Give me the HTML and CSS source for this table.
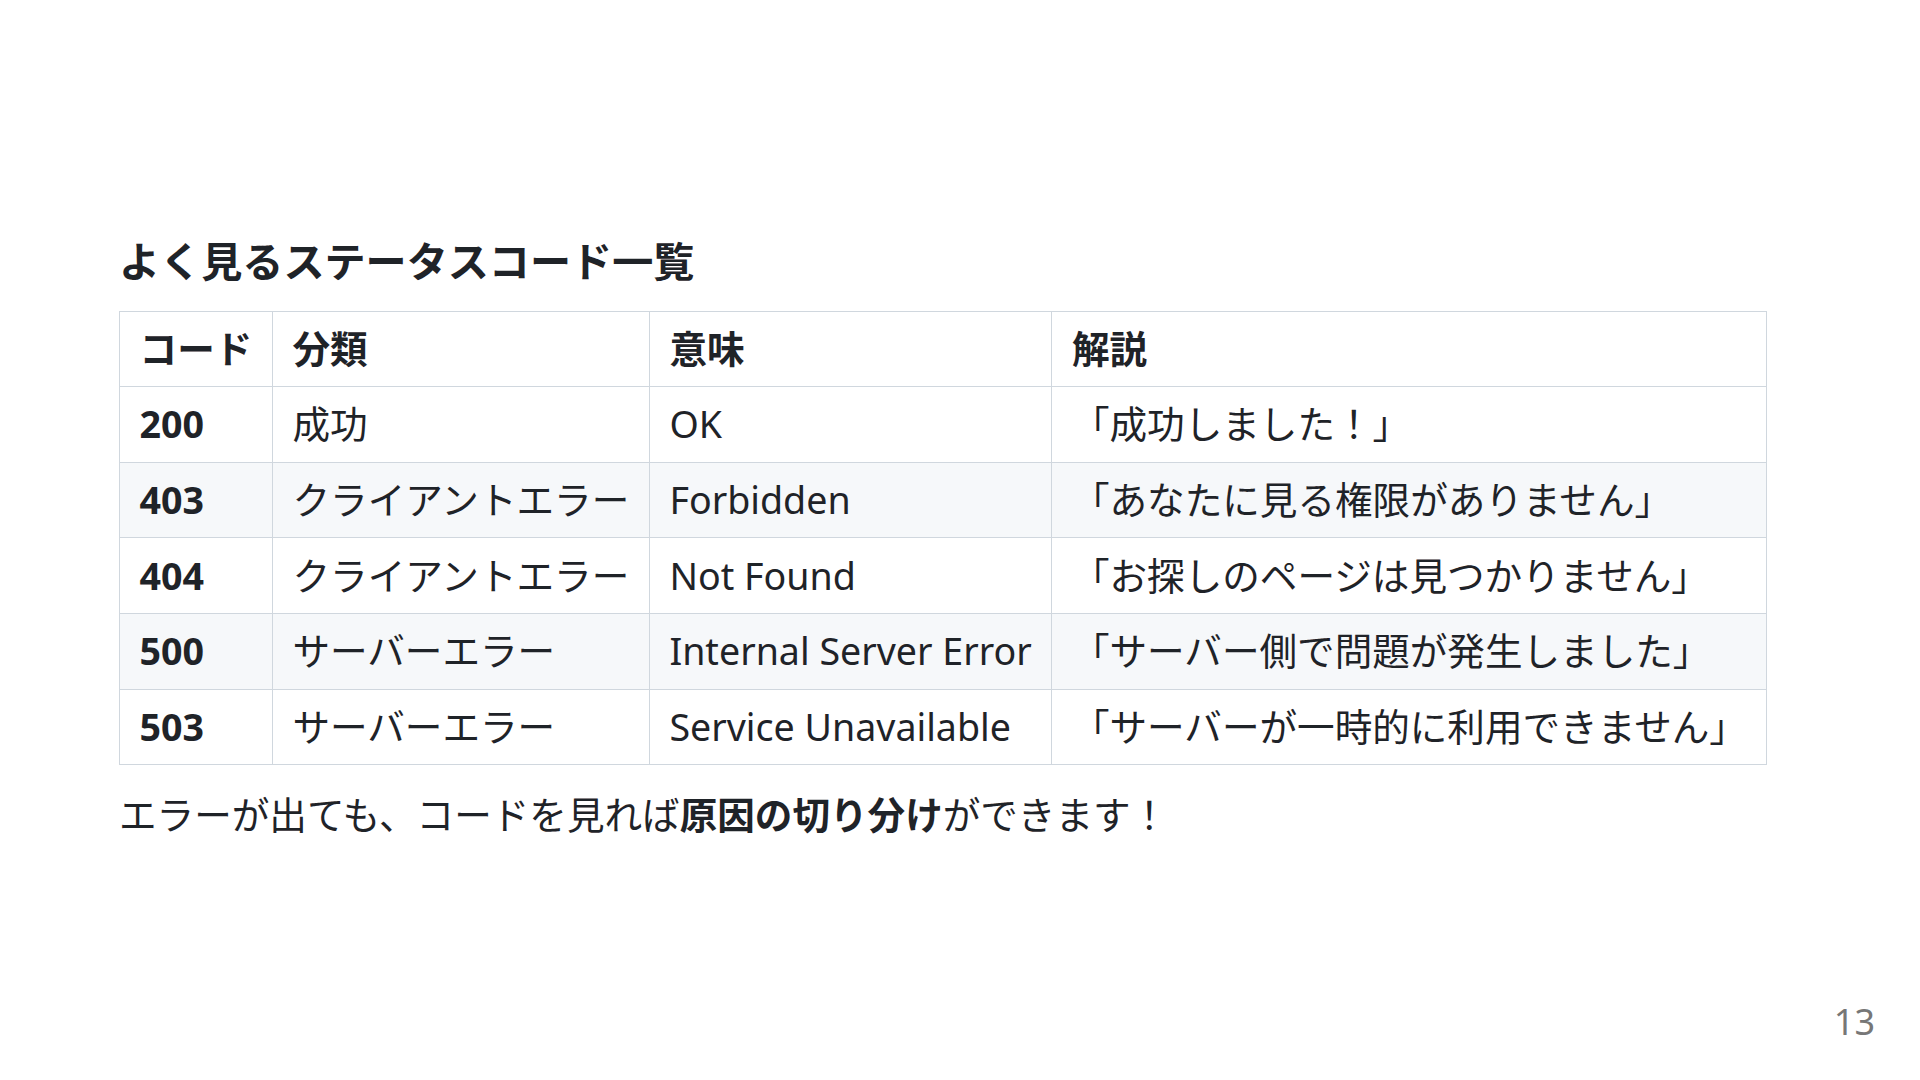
FILE: index.html
```html
<!DOCTYPE html>
<html lang="ja">
<head>
<meta charset="utf-8">
<title>よく見るステータスコード一覧</title>
<link rel="stylesheet" href="styles.css">
</head>
<body>
<section class="slide">
  <h2 class="title">よく見るステータスコード一覧</h2>
  <table class="codes">
    <thead>
      <tr><th>コード</th><th>分類</th><th>意味</th><th>解説</th></tr>
    </thead>
    <tbody>
      <tr><td><strong>200</strong></td><td>成功</td><td>OK</td><td>「成功しました！」</td></tr>
      <tr><td><strong>403</strong></td><td>クライアントエラー</td><td>Forbidden</td><td>「あなたに見る権限がありません」</td></tr>
      <tr><td><strong>404</strong></td><td>クライアントエラー</td><td>Not Found</td><td>「お探しのページは見つかりません」</td></tr>
      <tr><td><strong>500</strong></td><td>サーバーエラー</td><td>Internal Server Error</td><td>「サーバー側で問題が発生しました」</td></tr>
      <tr><td><strong>503</strong></td><td>サーバーエラー</td><td>Service Unavailable</td><td>「サーバーが一時的に利用できません」</td></tr>
    </tbody>
  </table>
  <p class="note">エラーが出ても、コードを見れば<strong>原因の切り分け</strong>ができます！</p>
  <div class="page-number">13</div>
</section>
</body>
</html>
```
FILE: styles.css
```css
html, body {
  margin: 0;
  padding: 0;
  background: #ffffff;
}
.slide {
  position: relative;
  box-sizing: border-box;
  width: 1920px;
  height: 1080px;
  padding: 0 119px;
  display: flex;
  flex-direction: column;
  align-items: flex-start;
  justify-content: center;
  font-family: "Noto Sans", "Noto Sans CJK JP", sans-serif;
  color: #1f2328;
  font-size: 37.6px;
  line-height: 1.5;
}
.title {
  margin: 0 0 23px 0;
  font-size: 41.1px;
  line-height: 1.25;
  font-weight: 700;
}
.codes {
  border-collapse: collapse;
  border-spacing: 0;
}
.codes th, .codes td {
  border: 1.5px solid #d0d7de;
  padding: 9.1px 19.6px;
  text-align: left;
  white-space: nowrap;
}
.codes th {
  font-weight: 700;
}
.codes td strong {
  font-weight: 700;
}
.codes tbody tr:nth-child(2n+1) {
  background: #ffffff;
}
.codes tbody tr:nth-child(2n) {
  background: #f6f8fa;
}
.note {
  margin: 22px 0 0 0;
}
.note strong {
  font-weight: 700;
}
.page-number {
  position: absolute;
  right: 45px;
  bottom: 40px;
  font-size: 36px;
  line-height: 1;
  color: #777777;
}
```
